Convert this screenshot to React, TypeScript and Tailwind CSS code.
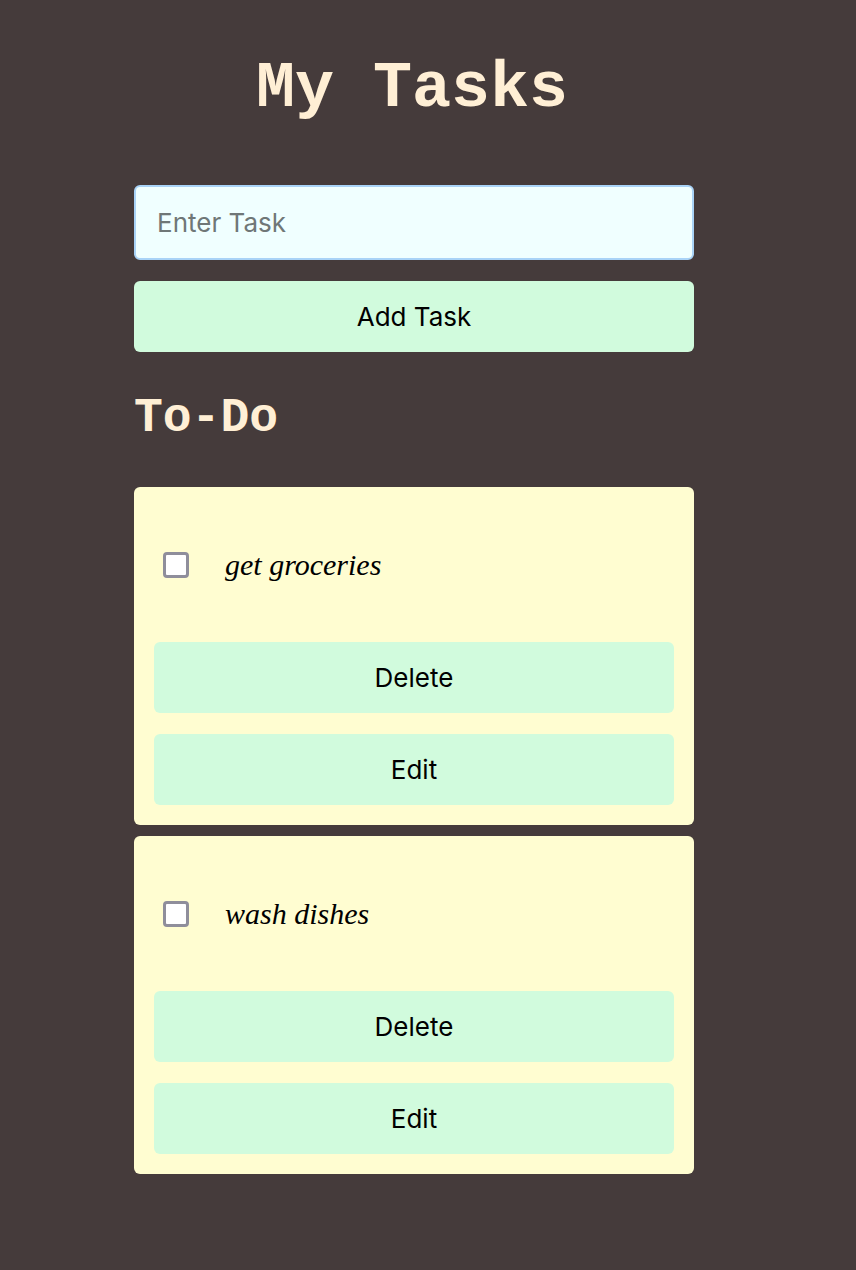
import { useState } from 'react';

interface Task {
  id: number;
  text: string;
  done: boolean;
}

const START_TASKS: Task[] = [
  { id: 1, text: 'get groceries', done: false },
  { id: 2, text: 'wash dishes', done: false },
];

const mono = { fontFamily: '"Liberation Mono", "Courier New", monospace' };
const sans = { fontFamily: 'Inter, "Liberation Sans", sans-serif' };

export default function App() {
  const [tasks, setTasks] = useState<Task[]>(START_TASKS);
  const [draft, setDraft] = useState('');

  const addTask = () => {
    if (!draft.trim()) return;
    setTasks([...tasks, { id: Date.now(), text: draft.trim(), done: false }]);
    setDraft('');
  };

  return (
    <div className="min-h-[1270px] bg-[#453b3b] pb-24" style={sans}>
      <div className="ml-[134px] w-[560px] pt-[53px]">
        <h1 className="text-center text-[65px] font-bold leading-[72px] text-[#ffefd5]" style={mono}>
          <span className="-ml-[4px]">My Tasks</span>
        </h1>

        <input
          value={draft}
          onChange={(e) => setDraft(e.target.value)}
          placeholder="Enter Task"
          className="mt-[60px] block h-[75px] w-full rounded-md border-2 border-[#a9d3f7] bg-[#f0ffff] px-[21px] text-[26px] text-black placeholder:text-[#6f7777] outline-none"
        />
        <button
          onClick={addTask}
          className="mt-[21px] block h-[71px] w-full rounded-md bg-[#d1fbdd] text-[26px] text-black"
        >
          Add Task
        </button>

        <h2 className="mt-[38px] text-[48px] font-bold leading-[56px] text-[#ffefd5]" style={mono}>
          To-Do
        </h2>

        <div className="mt-[41px] flex flex-col gap-[11px]">
          {tasks.map((task) => (
            <div key={task.id} className="rounded-md bg-[#fffdd1] pb-5">
              <div className="flex h-[155px] items-center">
                <input
                  type="checkbox"
                  checked={task.done}
                  onChange={() =>
                    setTasks(tasks.map((t) => (t.id === task.id ? { ...t, done: !t.done } : t)))
                  }
                  className="ml-[29px] h-[26px] w-[26px] appearance-none rounded-[4px] border-[3px] border-[#8f8e9b] bg-white"
                />
                <span
                  className="ml-[36px] text-[30px] italic text-black"
                  style={{ fontFamily: '"Liberation Serif", "DejaVu Serif", serif' }}
                >
                  {task.text}
                </span>
              </div>
              <div className="flex flex-col gap-[21px] px-5">
                <button
                  onClick={() => setTasks(tasks.filter((t) => t.id !== task.id))}
                  className="h-[71px] w-full rounded-md bg-[#d1fbdd] text-[26px] text-black"
                >
                  Delete
                </button>
                <button className="h-[71px] w-full rounded-md bg-[#d1fbdd] text-[26px] text-black">
                  Edit
                </button>
              </div>
            </div>
          ))}
        </div>
      </div>
    </div>
  );
}
